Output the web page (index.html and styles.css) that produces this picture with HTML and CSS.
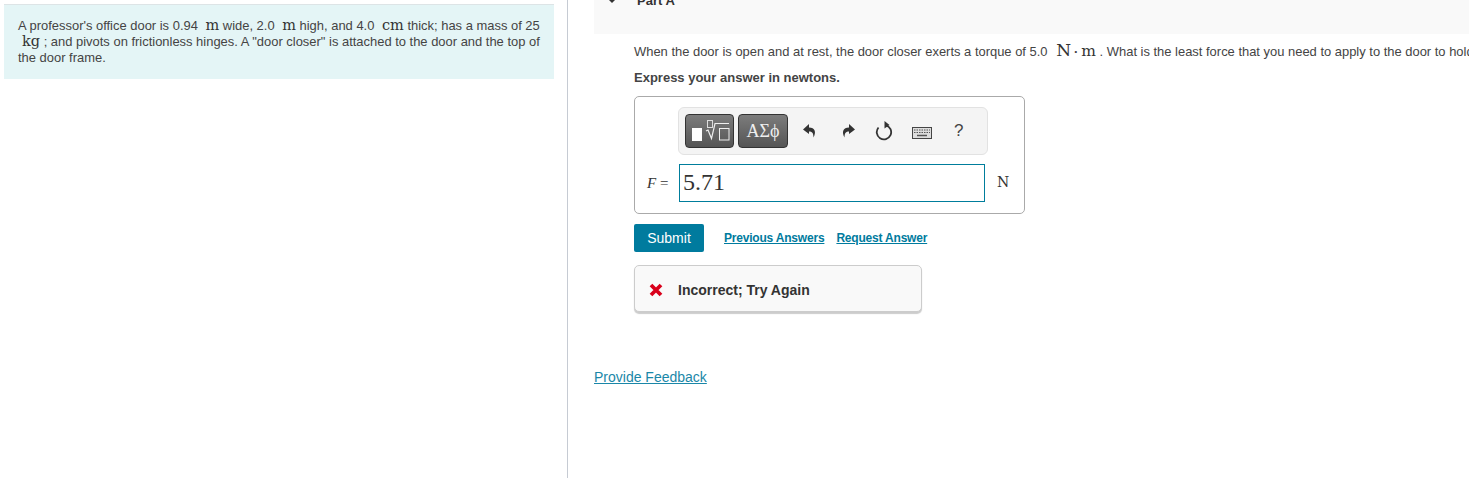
FILE: index.html
```html
<!DOCTYPE html>
<html lang="en">
<head>
  <meta charset="UTF-8" />
  <title>Part A</title>
  <link rel="stylesheet" href="styles.css">
</head>
<body>
  <div class="left-pane">
    <div class="intro">
      A professor's office door is 0.94 <span class="unit">m</span> wide, 2.0 <span class="unit">m</span> high, and 4.0 <span class="unit">cm</span> thick; has a mass of 25 <span class="unit">kg</span> ; and pivots on frictionless hinges. A "door closer" is attached to the door and the top of the door frame.
    </div>
  </div>

  <div class="right-pane">
    <div class="part-header">
      <svg class="caret" width="6" height="3" viewBox="0 0 6 3"><path d="M0 0h6L3 3z" fill="#333"/></svg>
      <span class="part-title">Part A</span>
    </div>

    <div class="part-body">
      <p class="question">When the door is open and at rest, the door closer exerts a torque of 5.0 <span class="unit big">N</span><span class="dot">·</span><span class="unit big-m">m</span> . What is the least force that you need to apply to the door to hold it open?</p>
      <p class="hint">Express your answer in newtons.</p>

      <div class="answer-box">
        <div class="toolbar">
          <div class="tool-btn templates">
            <svg width="47" height="32" viewBox="0 0 47 32">
              <rect x="6" y="13" width="10" height="13" fill="#fff"/>
              <rect x="21.500" y="5.500" width="5" height="7" fill="none" stroke="#ddd"/>
              <path d="M20 16l2-1 3.500 8.500L29 8.500h14" fill="none" stroke="#eee" stroke-width="1.200"/>
              <rect x="33.500" y="13.500" width="9.500" height="11.500" fill="none" stroke="#eee"/>
            </svg>
          </div>
          <div class="tool-btn symbols">ΑΣϕ</div>
          <svg class="tool-icon undo" width="16" height="16" viewBox="0 0 16 16"><path d="M7 1L1 6.500 7 11V8.500c3 0 4.500 1.500 4.500 6 3-5.500 1.500-10-4.500-10z" fill="#333"/></svg>
          <svg class="tool-icon redo" width="16" height="16" viewBox="0 0 16 16"><path d="M9 1l6 5.500L9 11V8.500c-3 0-4.500 1.500-4.500 6-3-5.500-1.500-10 4.500-10z" fill="#333"/></svg>
          <svg class="tool-icon reset" width="18" height="20" viewBox="0 0 18 20"><path d="M11 4.300A7.200 7.200 0 1 1 3.500 6.500" fill="none" stroke="#333" stroke-width="1.800"/><path d="M9.500 0l5 4-5 3.500z" fill="#333"/></svg>
          <svg class="tool-icon keyboard" width="20" height="12" viewBox="0 0 20 12">
            <rect x="0.500" y="0.500" width="19" height="11" fill="#ddd" stroke="#444"/>
            <path d="M2 3h16M2 5.500h16" stroke="#555" stroke-width="1.200" stroke-dasharray="1.500 1"/>
            <path d="M5 8.500h10" stroke="#555" stroke-width="1.500"/>
          </svg>
          <span class="tool-help">?</span>
        </div>
        <div class="answer-row">
          <span class="answer-label"><i>F</i> =</span>
          <input class="answer-input" type="text" value="5.71" />
          <span class="answer-unit">N</span>
        </div>
      </div>

      <div class="actions">
        <button class="submit">Submit</button>
        <a class="action-link" href="#">Previous Answers</a>
        <a class="action-link" href="#">Request Answer</a>
      </div>

      <div class="feedback">
        <svg width="14" height="14" viewBox="0 0 14 14"><path d="M2 2l10 10M12 2L2 12" stroke="#d9001b" stroke-width="3.800"/></svg>
        <span>Incorrect; Try Again</span>
      </div>
    </div>

    <a class="provide-feedback" href="#">Provide Feedback</a>
  </div>
</body>
</html>
```

FILE: styles.css
```css
html, body {
  height: 100%;
}

body {
  margin: 0;
  display: flex;
  height: 478px;
  overflow: hidden;
  background: #fff;
  color: #444;
  font-family: "Liberation Sans", Arial, sans-serif;
  font-size: 12.950px;
}

.left-pane {
  width: 563px;
  flex-shrink: 0;
  padding: 4px 0 0 4px;
  border-right: 1px solid #c6cbd3;
}

.intro {
  width: 550px;
  height: 75px;
  box-sizing: border-box;
  padding: 13px 10px 0 14px;
  background: #e4f5f6;
  border-top: 1px solid #dde4e6;
  line-height: 16px;
}

.unit {
  font-family: "DejaVu Serif", serif;
  font-size: 14.500px;
  line-height: 1;
  margin-left: 4px;
  color: #333;
}

.unit.big {
  font-size: 17px;
  margin-left: 5px;
}

.unit.big-m {
  font-size: 15.500px;
  margin-left: 0;
}

.dot {
  font-weight: bold;
  margin: 0 3px;
}

.right-pane {
  flex: 1;
  min-width: 0;
  padding-left: 26px;
  overflow: hidden;
}

/* header is scrolled partly out of view in the shot */
.part-header {
  height: 34px;
  background: #f9f9f9;
  display: flex;
  gap: 22px;
  align-items: flex-start;
  padding-left: 15px;
  overflow: hidden;
}

.part-title {
  margin-top: -7px;
  font-size: 13px;
  font-weight: bold;
  line-height: 15px;
  color: #333;
}

.part-body {
  padding-left: 40px;
}

.question {
  margin: 8px 0 0;
  height: 20px;
  line-height: 20px;
  white-space: nowrap;
}

.hint {
  margin: 6px 0 0;
  height: 20px;
  line-height: 20px;
  font-weight: bold;
  font-size: 13px;
}

.answer-box {
  width: 391px;
  height: 118px;
  box-sizing: border-box;
  margin-top: 8px;
  padding-top: 10px;
  border: 1px solid #aaa;
  border-radius: 5px;
}

.toolbar {
  width: 310px;
  height: 48px;
  box-sizing: border-box;
  margin-left: 43px;
  padding: 0 6px;
  display: flex;
  align-items: center;
  background: #f4f4f4;
  border: 1px solid #e2e2e2;
  border-radius: 6px;
}

.tool-btn {
  height: 34px;
  box-sizing: border-box;
  display: flex;
  align-items: center;
  justify-content: center;
  background: linear-gradient(#7c7c7c, #555);
  border: 1px solid #333;
  border-radius: 4px;
  color: #eee;
}

.templates {
  width: 49px;
}

.symbols {
  width: 50px;
  margin-left: 4px;
  font-family: "Liberation Serif", serif;
  font-size: 18px;
}

.tool-icon {
  flex-shrink: 0;
}

.undo {
  margin-left: 14px;
}

.redo {
  margin-left: 22px;
}

.reset {
  margin-left: 19px;
}

.keyboard {
  margin-left: 19px;
  margin-top: 3px;
}

.tool-help {
  margin-left: 22px;
  font-size: 17px;
  color: #444;
}

.answer-row {
  display: flex;
  align-items: center;
  margin-top: 9px;
}

.answer-label {
  width: 44px;
  box-sizing: border-box;
  padding-left: 12px;
  font-family: "Liberation Serif", serif;
  font-size: 15px;
  color: #333;
}

.answer-input {
  width: 306px;
  height: 38px;
  box-sizing: border-box;
  padding: 0 3px 2px;
  border: 1px solid #007d9c;
  font-family: "Liberation Serif", serif;
  font-size: 24px;
  color: #333;
  outline: none;
}

.answer-unit {
  margin-left: 12px;
  margin-top: -3px;
  font-family: "DejaVu Serif", serif;
  font-size: 14px;
  color: #333;
}

.actions {
  display: flex;
  align-items: center;
  margin-top: 10px;
}

.submit {
  width: 70px;
  height: 28px;
  padding: 0;
  border: none;
  border-radius: 2px;
  background: #007b9e;
  color: #fff;
  font-family: "Liberation Sans", Arial, sans-serif;
  font-size: 14px;
  margin-right: 20px;
}

.action-link {
  margin-right: 12px;
  color: #007b9e;
  font-size: 12px;
  font-weight: bold;
  letter-spacing: -0.200px;
}

.feedback {
  width: 288px;
  height: 47px;
  box-sizing: border-box;
  margin-top: 13px;
  padding: 2px 0 0 14px;
  display: flex;
  align-items: center;
  gap: 15px;
  background: #f9f9f9;
  border: 1px solid #ccc;
  border-radius: 5px;
  box-shadow: 0 2px 1px #ccc;
  color: #333;
  font-size: 14px;
  font-weight: bold;
}

.provide-feedback {
  display: inline-block;
  margin-top: 57px;
  color: #1a87a8;
  font-size: 14px;
}
```
